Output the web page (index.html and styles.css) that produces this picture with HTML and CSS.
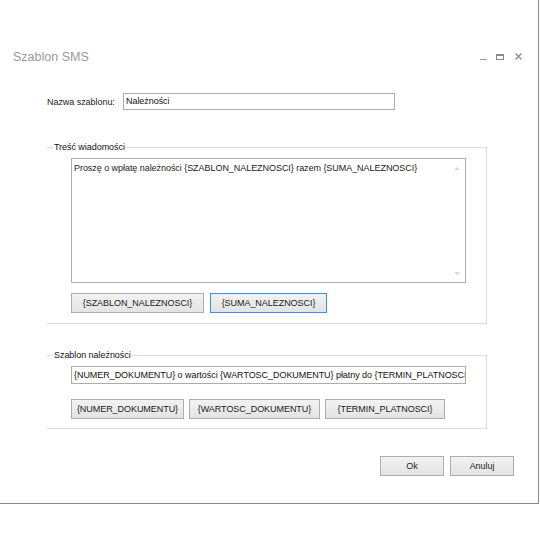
FILE: index.html
```html
<!DOCTYPE html>
<html lang="pl">
<head>
<meta charset="utf-8">
<link rel="stylesheet" href="styles.css">
</head>
<body>
<div class="window">
  <div class="titlebar">
    <span class="title">Szablon SMS</span>
    <div class="controls">
      <span class="ctl min"></span>
      <span class="ctl max"></span>
      <svg class="ctl close" width="7" height="7" viewBox="0 0 7 7"><path d="M0.5 0.5L6.5 6.5M6.5 0.5L0.5 6.5" stroke="#888" stroke-width="1.2"/></svg>
    </div>
  </div>
  <div class="content">
    <div class="name-row">
      <label class="label">Nazwa szablonu:</label>
      <div class="input name-input">Należności</div>
    </div>
    <div class="group group-msg">
      <div class="legend-row"><span class="line-l"></span><span class="legend">Treść wiadomości</span><span class="line-r"></span></div>
      <div class="group-body">
        <div class="textarea">
          <span class="ta-text">Proszę o wpłatę należności {SZABLON_NALEZNOSCI} razem {SUMA_NALEZNOSCI}</span>
          <div class="scroll">
            <span class="arr up"></span>
            <span class="arr down"></span>
          </div>
        </div>
        <div class="btn-row">
          <div class="btn w133">{SZABLON_NALEZNOSCI}</div>
          <div class="btn w117 focused">{SUMA_NALEZNOSCI}</div>
        </div>
      </div>
    </div>
    <div class="group group-tpl">
      <div class="legend-row"><span class="line-l"></span><span class="legend">Szablon należności</span><span class="line-r"></span></div>
      <div class="group-body">
        <div class="input tpl-input">{NUMER_DOKUMENTU} o wartości {WARTOSC_DOKUMENTU} płatny do {TERMIN_PLATNOSCI}</div>
        <div class="btn-row row2">
          <div class="btn w113">{NUMER_DOKUMENTU}</div>
          <div class="btn w131">{WARTOSC_DOKUMENTU}</div>
          <div class="btn w120">{TERMIN_PLATNOSCI}</div>
        </div>
      </div>
    </div>
    <div class="footer">
      <div class="btn w64">Ok</div>
      <div class="btn w64">Anuluj</div>
    </div>
  </div>
</div>
</body>
</html>
```

FILE: styles.css
```css
* { box-sizing: border-box; }
html, body { margin: 0; padding: 0; background: #fff; }
body {
  font-family: "Liberation Sans", Arial, sans-serif;
  font-size: 9px;
  letter-spacing: -0.05px;
  color: #1a1a1a;
}
.window {
  width: 539px;
  height: 504px;
  border-right: 1px solid #8a8a8a;
  border-bottom: 1px solid #8a8a8a;
  background: #fff;
  display: flex;
  flex-direction: column;
}
.titlebar {
  height: 84px;
  display: flex;
  align-items: flex-start;
  justify-content: space-between;
  padding: 48px 0 0 13px;
}
.title {
  font-size: 12.5px;
  letter-spacing: 0;
  color: #9a9a9a;
  line-height: 18px;
}
.controls {
  display: flex;
  align-items: center;
  gap: 9px;
  padding-right: 16px;
  margin-top: 5px;
}
.ctl { display: block; }
.min { width: 7px; height: 1px; background: #999; margin-top: 6px; }
.max { width: 8px; height: 6px; border: 1px solid #888; border-top-width: 2px; }
.close { margin-left: 2px; }
.content {
  padding: 9px 0 0 47px;
  display: flex;
  flex-direction: column;
}
.name-row {
  display: flex;
  align-items: center;
  height: 17px;
}
.label { width: 76px; line-height: 16px; white-space: nowrap; }
.input {
  border: 1px solid #acacac;
  height: 17px;
  line-height: 15px;
  padding-left: 2px;
  white-space: nowrap;
  overflow: hidden;
  color: #111;
}
.name-input { width: 272px; }
.group {
  width: 440px;
  border-right: 1px solid #dcdcdc;
  border-bottom: 1px solid #dcdcdc;
}
.group-msg { margin-top: 37px; height: 177px; }
.group-tpl { margin-top: 31px; height: 74px; }
.legend-row {
  display: flex;
  align-items: center;
  height: 0;
}
.line-l { width: 6px; height: 1px; background: #dcdcdc; }
.line-r { flex: 1; height: 1px; background: #dcdcdc; }
.legend { padding: 0 1px; line-height: 12px; color: #111; }
.group-body { padding: 11px 0 0 24px; }
.textarea {
  width: 395px;
  height: 125px;
  border: 1px solid #acacac;
  display: flex;
  justify-content: space-between;
  padding: 3px 0 0 2px;
}
.ta-text { line-height: 12px; white-space: nowrap; }
.scroll {
  width: 16px;
  display: flex;
  flex-direction: column;
  justify-content: space-between;
  align-items: center;
  padding: 5px 0 7px;
}
.arr { width: 0; height: 0; border-left: 3px solid transparent; border-right: 3px solid transparent; }
.arr.up { border-bottom: 3px solid #d8d8d8; }
.arr.down { border-top: 3px solid #d8d8d8; }
.btn-row { display: flex; gap: 6px; margin-top: 10px; }
.row2 { gap: 5px; margin-top: 15px; }
.btn {
  height: 20px;
  border: 1px solid #adadad;
  background: linear-gradient(#f2f2f2, #e3e3e3);
  display: flex;
  align-items: center;
  justify-content: center;
  white-space: nowrap;
  color: #1a1a1a;
}
.btn.focused { border-color: #3c8ee8; }
.tpl-input { width: 395px; height: 18px; line-height: 16px; }
.w133 { width: 133px; }
.w117 { width: 117px; }
.w113 { width: 113px; }
.w131 { width: 131px; }
.w120 { width: 120px; }
.w64 { width: 64px; }
.footer {
  display: flex;
  gap: 6px;
  justify-content: flex-end;
  width: 467px;
  margin-top: 27px;
}
```
